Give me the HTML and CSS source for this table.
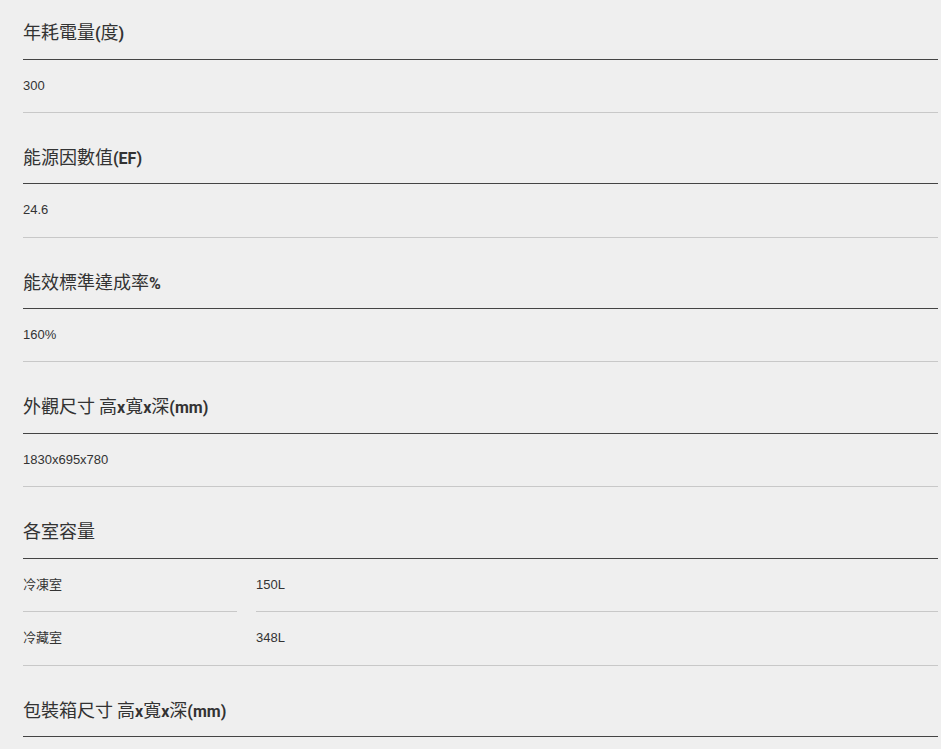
FILE: index.html
```html
<!DOCTYPE html>
<html lang="zh-Hant">
<head>
<meta charset="utf-8">
<link rel="stylesheet" href="styles.css">
</head>
<body>
<div class="spec">
  <section class="item">
    <h3 class="item-title">年耗電量<span class="lat">(</span>度<span class="lat">)</span></h3>
    <div class="item-value">300</div>
  </section>
  <section class="item">
    <h3 class="item-title">能源因數值<span class="lat">(EF)</span></h3>
    <div class="item-value">24.6</div>
  </section>
  <section class="item">
    <h3 class="item-title">能效標準達成率<span class="lat">%</span></h3>
    <div class="item-value">160%</div>
  </section>
  <section class="item">
    <h3 class="item-title">外觀尺寸 高<span class="lat">x</span>寬<span class="lat">x</span>深<span class="lat">(mm)</span></h3>
    <div class="item-value">1830x695x780</div>
  </section>
  <section class="item">
    <h3 class="item-title">各室容量</h3>
    <div class="item-table">
      <div class="cell">冷凍室</div>
      <div class="cell">150L</div>
      <div class="cell">冷藏室</div>
      <div class="cell">348L</div>
    </div>
  </section>
  <section class="item">
    <h3 class="item-title">包裝箱尺寸 高<span class="lat">x</span>寬<span class="lat">x</span>深<span class="lat">(mm)</span></h3>
  </section>
</div>
</body>
</html>
```

FILE: styles.css
```css
html, body {
  margin: 0;
  padding: 0;
  background: #efefef;
}

body {
  font-family: "Liberation Sans", Arial, "Noto Sans CJK TC", sans-serif;
  color: #333;
}

.spec {
  padding: 0 3px 0 23px;
}

.item-title {
  margin: 0;
  padding: 31px 0 15.5px;
  font-family: "Noto Sans CJK TC", sans-serif;
  font-size: 18px;
  font-weight: 400;
  line-height: 24px;
  color: #333;
  border-bottom: 1px solid #444;
}

.item:first-child .item-title {
  padding-top: 19px;
  padding-bottom: 15.5px;
}

.lat {
  font-family: Roboto, "Liberation Sans", sans-serif;
  font-size: 16px;
  font-weight: 700;
  line-height: 1;
}

.item-value {
  padding: 16px 0 16.25px;
  font-size: 13px;
  line-height: 20px;
  color: #333;
  border-bottom: 1px solid #c8c8c8;
}

.item-table {
  display: grid;
  grid-template-columns: 214px 1fr;
  column-gap: 19px;
  border-bottom: 1px solid #c8c8c8;
}

.cell {
  padding: 16px 0 16px;
  font-size: 13px;
  line-height: 20px;
  color: #333;
  border-bottom: 1px solid #c8c8c8;
}

.cell:nth-last-child(-n+2) {
  border-bottom: none;
  padding-bottom: 17px;
}
```
